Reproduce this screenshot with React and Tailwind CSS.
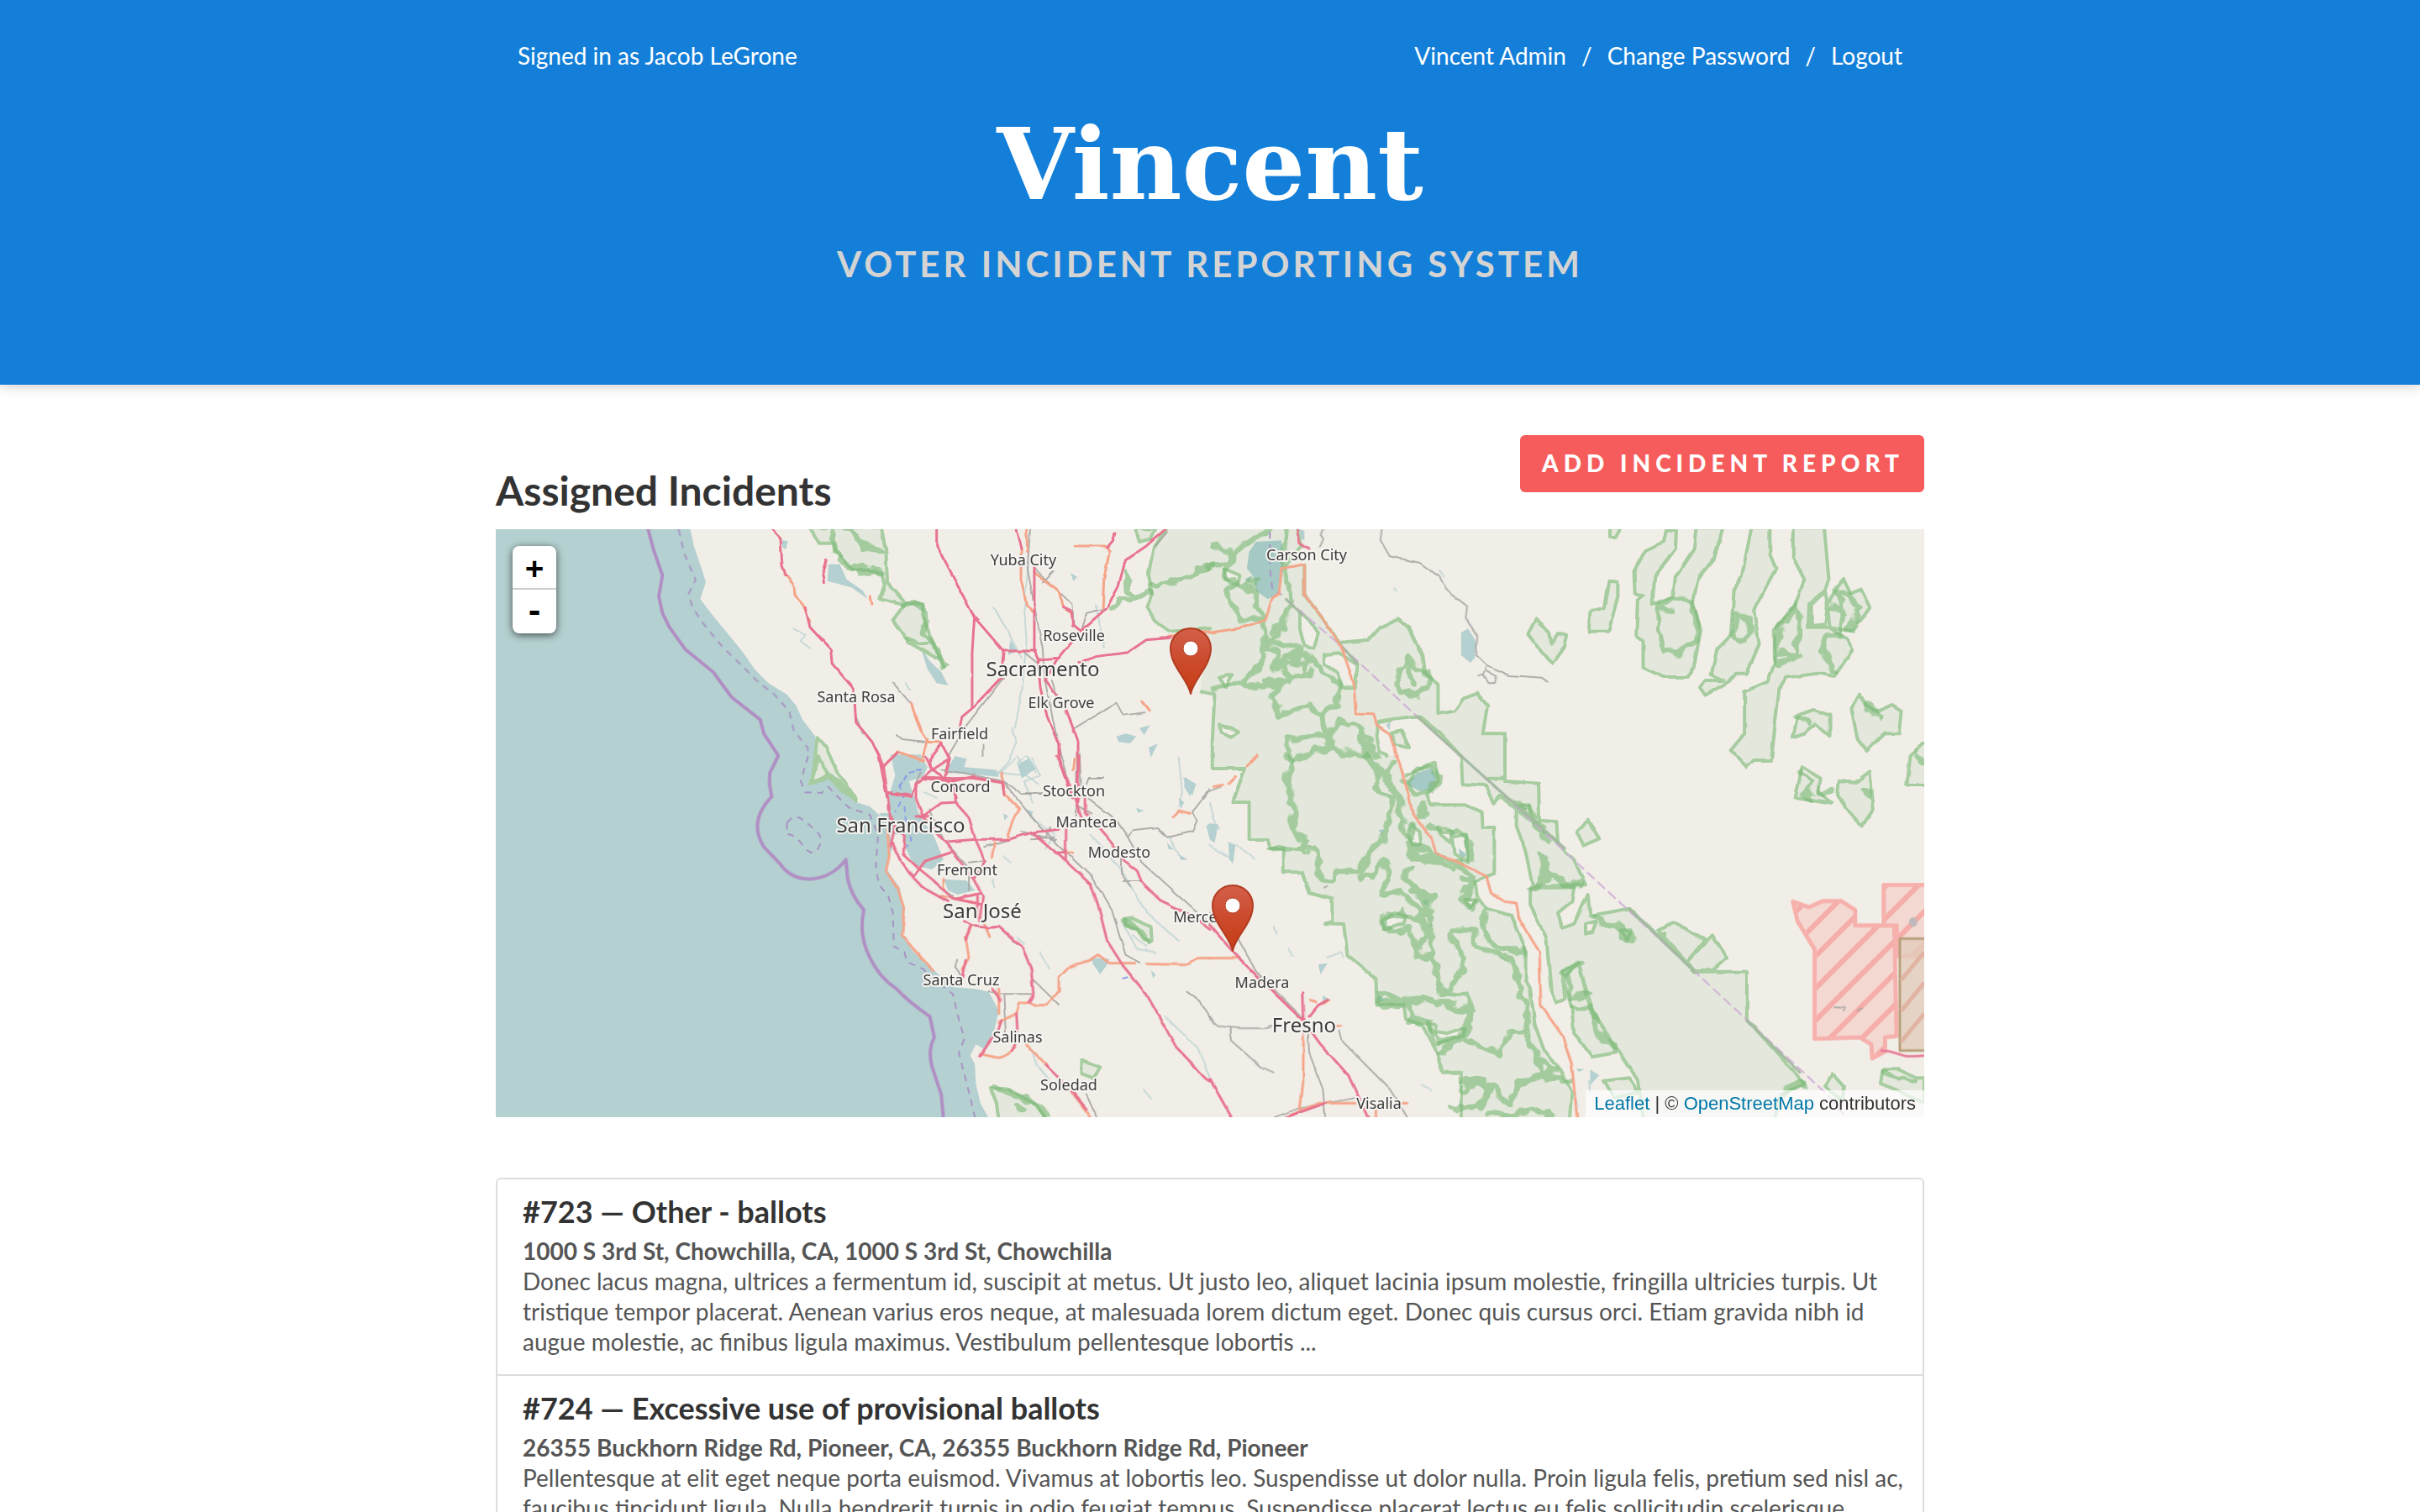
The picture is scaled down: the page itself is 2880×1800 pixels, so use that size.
const cities = [
  { name: 'Yuba City', x: 628, y: 43 },
  { name: 'Roseville', x: 688, y: 133 },
  { name: 'Sacramento', x: 651, y: 175, major: true },
  { name: 'Elk Grove', x: 673, y: 213 },
  { name: 'Santa Rosa', x: 429, y: 206 },
  { name: 'Fairfield', x: 552, y: 250 },
  { name: 'Concord', x: 553, y: 313 },
  { name: 'Stockton', x: 688, y: 318 },
  { name: 'San Francisco', x: 482, y: 361, major: true },
  { name: 'Manteca', x: 703, y: 355 },
  { name: 'Modesto', x: 742, y: 391 },
  { name: 'Fremont', x: 561, y: 412 },
  { name: 'San José', x: 579, y: 463, major: true },
  { name: 'Merced', x: 838, y: 468 },
  { name: 'Santa Cruz', x: 554, y: 543 },
  { name: 'Salinas', x: 621, y: 611 },
  { name: 'Soledad', x: 682, y: 668 },
  { name: 'Madera', x: 912, y: 546 },
  { name: 'Fresno', x: 962, y: 599, major: true },
  { name: 'Visalia', x: 1051, y: 690 },
  { name: 'Carson City', x: 965, y: 37 },
];

/* The map is drawn as four sheets that share one scale; each sheet has its own origin.
   `forest` areas are filled and outlined, `woods` only filled, `edge` only outlined. */
const sheets = [
  {
    id: 'nw',
    transform: 'translate(-10 -140) scale(0.5484 0.3333)',
    water: [
      'M0 400H438L448 480L465 560L474 610L462 670L490 730L520 790L555 860L580 920L610 970L650 1010L670 1050L684 1100L712 1160L716 1232H0Z',
      'M740 545L765 545L780 600L815 640L825 668L790 628L738 605Z',
      'M940 840L960 890L985 930L1000 978L975 970L955 920Z',
      'M875 1240L925 1225L955 1270L945 1300L940 1236L875 1236Z',
      'M1000 1270L1015 1230L1040 1240L1035 1270L1105 1280L1110 1305L1050 1295L1000 1290Z',
      'M640 460L652 462L648 492L640 485Z',
      'M1135 815L1150 855L1130 870Z',
      'M1365 1160L1385 1150L1408 1160L1395 1185L1370 1180ZM1415 1130L1438 1120L1425 1155ZM1435 1200L1455 1185L1440 1235Z',
      'M1265 575L1280 590L1272 605ZM1515 1305L1535 1330L1525 1375L1512 1340Z',
      'M1150 1260L1175 1240L1190 1275L1160 1310Z',
    ],
    streams: [
      'M665 775L690 795L680 820L700 845M908 965L918 990M1140 1130L1148 1180L1130 1250L1110 1290L1170 1300L1195 1330M1150 1255L1170 1230L1190 1290',
      'M1175 530L1165 700L1170 820L1160 1000L1145 1130M1100 700L1130 790L1160 880M1320 690L1340 840',
    ],
    forest: [
      'M700 415L855 415L865 500L868 610L905 680L945 685L945 730L965 820L992 912L985 890L915 825L880 745L905 690L850 670L862 620L855 575L790 560L755 500L750 470L720 470Z',
      'M716 1165L735 1200L760 1290L775 1320L800 1385L740 1300L705 1325Z',
      'M1405 415L1450 420L1440 455L1415 465Z',
    ],
    woods: ['M1475 415L1445 490L1435 580L1442 650L1432 700L1450 750L1480 785L1569 775V415Z'],
    edge: ['M1475 415L1445 490L1435 580L1442 650L1432 700L1450 750L1480 785L1569 775'],
    ridge: [
      'M750 420L755 500L790 560L855 575M780 420L820 480L860 490M905 690L945 685L950 780L990 910M915 820L950 830',
      'M1350 705L1375 670L1440 650M1385 570L1390 640L1420 660M1440 620L1500 600L1568 555',
    ],
    clearing: [],
    lake: [],
    trunk: [
      'M645 580L665 620L668 660L685 690L700 750M1158 490L1158 600L1170 690L1187 720M1187 575L1240 640L1250 700L1268 720',
      'M1275 480L1340 480L1350 500L1338 600L1335 700M920 1045L940 1140L955 1180L985 1182M945 1230L955 1170M1170 420L1172 500M830 660L833 688',
      'M1480 805L1568 785M1420 1035L1436 1068M858 1270L890 1215L945 1245M1275 1240L1272 1280M1118 1290V1320',
    ],
    rail: [
      'M1178 420L1172 560L1205 850L1210 960M1120 950L1040 1120L1000 1230M1165 860L1195 900M1275 1130L1365 1040L1380 1085L1425 1075M880 968L920 1045M890 1155L900 1170L955 1180M1187 560L1270 690L1272 770',
      'M1290 780L1300 720L1345 700M1225 960L1240 1030M1285 1220L1290 1380M1305 1308H1335M985 1280L1030 1290L1120 1320L1160 1365L1205 1365M1210 960L1240 1200L1270 1380M1075 1190V1230M1228 570L1205 610',
      'M1450 480L1475 430M1568 1345L1550 1380M800 1090L815 1150',
    ],
    motorway: [
      'M618 420L636 450L640 550L648 585M690 700L700 770L745 850L748 900L795 990L800 1110L835 1180L850 1230L858 1300L868 1380',
      'M975 415V480L1057 735L1120 855H1190M1057 735L1052 860V1060M1120 855L1115 950L1052 1060L1030 1090L1022 1150',
      'M1147 420L1158 490M1187 555V855L1195 885L1240 880L1290 780L1345 700L1370 620L1385 530L1430 480L1475 415M1250 700L1268 715L1270 765L1285 785',
      'M1195 885L1200 990L1215 1090L1240 1190V1240L1268 1380M1212 960L1255 1060L1282 1180V1380M1240 880L1210 960',
      'M1285 895L1320 875L1390 860L1430 815L1485 808M985 1185L960 1240L962 1270L1010 1340L1018 1380M985 1185L1003 1240L995 1290M945 1310L1010 1320L1050 1305L1118 1325L1122 1370M858 1270L890 1218',
      'M735 530L728 570L732 608M1362 435L1358 460L1345 485M868 1360L920 1372L930 1330',
    ],
    boundary: [
      'M348 415L360 490L380 585L372 660L380 720L395 770L430 850L490 930L530 1020L592 1100L600 1150L630 1225L630 1234',
    ],
    boundaryDashed: [
      'M415 420L428 510L452 600L437 650L445 700L470 760L510 840L560 920L590 970L620 1005L655 1070L665 1140L695 1200L696 1230',
    ],
    ferry: ['M915 1290L940 1280M893 1340L910 1300M866 1365L885 1360'],
    state: [],
    stateSolid: [],
  },
  {
    id: 'sw',
    transform: 'translate(-10 270) scale(0.5484 0.3333)',
    water: [
      'M0 0H716L697 100L740 75L775 110L800 165L830 180L850 210L870 262L880 320L865 400L895 470L905 560L900 640L925 700L960 750L985 790L1010 825L1060 832L1088 842L1110 910L1100 980L1082 1050L1060 1030L1048 1070L1058 1100L1060 1170L1070 1240L1090 1300H0Z',
      'M875 -5L940 -5L955 40L945 75L915 90L925 140L935 200L970 290L990 370L965 405L925 390L905 320L905 262L872 220V140L885 70Z',
      'M850 205L905 200L905 280H875Z',
      'M990 440L1040 445L1058 480L1020 495L1000 480Z',
      'M1310 720L1350 725L1345 745L1330 780L1315 745Z',
      'M1120 205L1130 215L1122 230ZM1170 190L1185 200L1178 220ZM1500 150L1512 165L1505 190ZM1475 310L1490 335L1478 332ZM1500 350L1520 370L1505 372ZM1408 185L1425 195L1412 203ZM1440 765L1450 780L1445 795Z',
      'M1510 75L1538 100L1530 140L1515 110ZM1560 250L1568 240V300Z',
    ],
    streams: [
      'M1110 65L1145 10M1180 10L1200 70L1165 90L1185 170M1150 0L1170 60M1180 1050L1190 1100L1220 1160M1500 5L1508 130L1500 180M1120 360L1135 380M1095 440L1100 470M1150 650L1165 670M1200 700L1220 760',
      'M1380 600L1410 690L1450 700M1400 640L1430 680M1480 290L1500 350M1425 1190L1440 1220M950 130L975 150M1180 220L1230 280L1210 330',
      'M1310 280L1380 420L1430 560L1500 660M1470 930L1540 1040L1568 1150',
    ],
    forest: [
      'M718 0L740 65L765 90L800 165L770 120L740 75L700 102L712 50Z',
      'M1383 585L1400 580L1440 610L1442 660L1425 655L1410 620L1385 602Z',
      'M1290 1085L1310 1100L1330 1115L1315 1150L1290 1135Z',
      'M1092 1185L1130 1190L1190 1245L1215 1300L1110 1300L1105 1240Z',
    ],
    woods: [],
    edge: [],
    ridge: ['M1383 590L1415 620L1440 655M1092 1185L1130 1195L1190 1245L1215 1290M1150 1250L1165 1262'],
    clearing: [],
    lake: [],
    trunk: [
      'M868 260L872 360L865 410L892 480L905 550L900 640L925 690L970 770M1120 100L1125 140L1155 190L1140 230L1128 290M1100 310L1095 360',
      'M1050 610L1038 650L1045 720L1030 765M1175 880L1190 890H1215L1240 840V790L1260 755L1305 730L1325 710L1350 740H1405M1432 743L1515 746L1540 722H1568',
      'M1110 830L1110 920M1175 880L1155 885L1148 920L1110 950M1070 1065L1110 1078L1130 1068L1145 1040M1170 1032L1190 1065L1215 1105M1268 1200L1310 1290M1490 215L1500 195L1525 205M1078 600L1090 645M990 440V480M985 500L1060 525',
      'M1245 345H1270M915 0L945 12',
    ],
    rail: [
      'M960 190L990 300L1045 400V480M1120 90L1150 155L1200 255L1310 430L1355 550L1385 710L1415 738M1305 155L1365 230L1390 290L1420 380L1500 500L1568 600M1390 290L1400 265L1455 255L1475 290L1530 270L1540 230L1530 200L1568 120',
      'M1280 0L1278 210M1300 100L1305 80H1335M1375 370V420L1395 465M1380 447H1420M1110 610L1150 670M1185 800L1240 888M1088 840L1110 850L1180 850M1020 725L1015 755L1030 790M1120 850L1125 990M1300 1210L1322 1290',
      'M1518 842L1545 875L1568 935M970 450L1010 500M1160 270L1235 300M1180 295L1230 290M1220 255L1210 290L1235 300M1078 325L1150 290M1045 380L1080 372M940 60L930 95M1160 133H1205M1283 180L1310 205',
    ],
    motorway: [
      'M850 0L860 40L868 130L920 145M868 130L870 190L885 250L875 320M868 130L875 230L905 285L903 350L935 400L965 440L1010 508L1070 530M880 310L900 380L925 435L945 470L1000 520',
      'M950 0L965 50L948 75L930 100V150L945 215L1000 320L1055 440L1075 500L1068 590M945 215L985 168L1015 165L1045 220L1060 300L1080 375L1055 440M1010 85L1015 165M950 75L1010 80L1050 78L1118 95L1122 135',
      'M925 430L950 375L1005 345M1000 305L1060 298H1130L1185 272L1240 262M1185 275L1255 375L1310 460L1325 530L1345 660L1380 750L1430 850L1495 1040L1568 1165M1256 255L1255 375M1232 345H1255',
      'M1018 510L1070 490M1035 590Q1060 620 1110 610L1160 680L1180 760L1185 850L1175 880M1048 610L1038 655M1038 730L1030 790M1098 830L1112 875M1235 0L1260 90L1290 220M1284 0L1280 180M1297 150V200L1345 290L1380 370L1410 410L1420 450L1460 515L1530 570L1568 620',
      'M1115 945L1108 980L1068 1072M1148 920L1150 970L1145 1000M1145 1030L1138 1055M1212 1105L1240 1150L1270 1200L1300 1260M1000 -4L1003 10L965 50M1000 30L990 75M930 215H960M1062 500V580',
    ],
    boundary: [
      'M631 0L613 60L612 100L617 145C585 200 575 260 600 325L635 385C665 460 735 460 778 370L782 440Q790 500 817 550Q805 640 830 720Q850 790 888 832Q915 880 960 930L970 1005Q955 1050 965 1110L985 1210L990 1300',
    ],
    boundaryDashed: [
      'M696 0L680 90L690 130L725 132L740 110L760 145L785 185L830 210L848 280L843 400L850 460L870 500L880 560L882 680L905 700L910 735L945 760L970 800L1010 850L1020 920L1035 1010L1023 1060L1045 1200L1058 1290',
      'M650 240Q665 205 682 225T715 270T718 330T685 320T650 280Z',
    ],
    ferry: ['M910 70L895 110L905 140L885 200M905 180L908 230L920 300L910 325M930 50L942 48M1378 795L1390 790'],
    state: [],
    stateSolid: [],
  },
  {
    id: 'ne',
    transform: 'translate(850 -140) scale(0.5484 0.3333)',
    water: ['M545 790L560 775L577 820L575 880L565 897L545 870Z', 'M192 420L205 425L205 460L197 455Z', 'M382 1120L392 1105L390 1138Z'],
    streams: ['M498 570L508 590M90 860L95 880M108 1180L115 1165M0 700L10 715M398 630L402 640'],
    woods: [
      'M-1 415H190L200 480L165 545L205 545V655L245 740L280 825L345 815L370 770L410 742L430 770L460 870L465 930L495 975V1080L530 1070L550 1025L580 1007L602 1050L592 1150H640V1234H545L500 1150L455 1090L400 1100L365 1110L362 1160L370 1200L380 1234H5V1180L10 1010L-20 1000Z',
    ],
    edge: [
      'M190 415L200 480L165 545M205 545V655L245 740L280 825L345 815L370 770L410 742L430 770L460 870L465 930L495 975V1080L530 1070L550 1025L580 1007L602 1050L592 1150H640V1231',
      'M545 1231L500 1150L455 1090L400 1100L365 1110L362 1160L368 1215L385 1225V1231M5 1231V1180L10 1010L-20 1000',
    ],
    forest: [
      'M990 425H1012L1010 490L965 590L960 690L1005 660L1010 590L1050 490L1055 415H1113L1095 520L1060 590L1048 680L1065 780L1050 915L1035 948H985L940 915V820L925 800L928 670L940 655L922 650L920 570L945 495L985 465Z',
      'M1175 415H1215V510L1228 560L1180 710L1192 830L1165 935H1140L1125 965L1075 1013L1063 985L1075 960H1115L1088 940L1100 850L1130 800L1137 640L1155 580Z',
      'M1265 415H1333L1343 600L1335 635L1300 690L1298 770H1345L1380 810L1395 850L1355 945L1320 935L1250 950L1235 990L1218 1245H1180L1165 1270L1130 1210L1160 1150V1000L1210 965L1225 900V780L1270 690L1290 600L1265 520Z',
      'M1375 600L1390 650L1413 635L1432 700L1395 785L1345 772L1340 690L1355 640Z',
      'M865 605L885 608V660L865 785H822L825 715L855 700Z',
      'M707 740L735 790L740 830L755 792L775 800L770 840L745 897L720 860L690 795Z',
      'M868 415H892L880 450H868Z',
      'M1265 1165L1275 1085L1310 1065L1345 1085V1160L1315 1115L1290 1150Z',
      'M1410 1010L1425 1050L1450 1070L1480 1050L1500 1070L1495 1150H1465L1425 1212L1405 1170L1392 1060Z',
      'M395 1145L415 1138L432 1200L400 1190Z',
    ],
    ridge: [
      'M10 480L50 510L30 580L70 620L100 600M0 560L40 540L45 490M40 640L55 620L95 630L105 700L115 740L75 745L45 690ZM165 420L160 545L170 620L175 700L140 800L120 830L115 740M130 420L80 470L50 510',
      'M120 830L110 900L70 970L0 990M130 820L200 850L180 900L230 900L250 940L280 970L275 1040L240 1090L210 1040L150 1090L130 1010L170 960L120 960M190 860L150 900L180 950L220 930M60 970L100 980L150 970M120 830L150 860L140 920L170 900M200 850L215 890L200 920',
      'M245 1090L255 1150L165 1170L170 1225M240 1090L260 1200L300 1220L340 1232M260 1200L220 1225L180 1240M285 1105L325 1130L330 1200L360 1225M290 1105L265 1140L262 1190M325 1150L345 1180L335 1210',
      'M430 875L440 920L470 930L475 980L450 1010L410 1000L405 940ZM430 900L440 970',
      'M975 700L1005 665L1045 680L1058 760L1055 820L1010 855L985 850L970 740ZM975 700L1005 715',
      'M1140 730L1165 735L1180 790L1160 820L1135 800ZM1270 685L1280 760L1270 880L1235 900L1230 780L1270 700M1240 860L1280 880M1365 640L1375 720L1365 800L1330 800L1340 880L1355 940M1350 690L1380 720M1375 640L1410 700L1390 780',
      'M1275 1085L1300 1110M1420 1050L1450 1090',
    ],
    clearing: [
      'M195 715L215 745L235 790L225 845L205 835L195 780Z',
      'M248 868L280 862L320 905L315 985H288L275 930L248 900Z',
      'M30 560L65 585L60 620L35 600ZM20 1120L45 1130L62 1145L45 1160L25 1145Z',
      'M1305 690L1335 640L1340 690L1335 760L1305 765ZM20 950L48 940L35 985Z',
    ],
    lake: ['M100 465L155 460L160 560L150 650L125 670L100 640L95 590L80 560L85 500Z', 'M75 600L92 585L85 610Z'],
    trunk: ['M0 790L60 775L120 745L135 670L150 650L155 560L205 545V655L245 740L285 840L312 970L316 1080L355 1082L362 1120L390 1150L404 1232M80 1265L100 1230'],
    rail: ['M373 415L370 460L390 517L455 540L498 590L515 640L558 695L555 740L580 800L578 870L600 905L650 942L720 950L732 965M600 905L592 940L605 970H618L622 945L600 925M582 940H592M245 420L240 440L246 455L238 485'],
    motorway: ['M190 415L195 470L215 492'],
    boundary: [],
    boundaryDashed: ['M130 430V560L135 630L155 655'],
    ferry: [],
    state: ['M165 670L280 830L450 1090L545 1232'],
    stateSolid: ['M165 670L200 725M278 825L320 900M450 1090L545 1232'],
  },
  {
    id: 'se',
    transform: 'translate(850 270) scale(0.5484 0.3333)',
    water: [
      'M365 680L378 690L370 705ZM0 240L18 245L10 310L0 300ZM40 310L55 320L50 385L42 370ZM235 745L255 740L240 780ZM245 855L260 870L245 885ZM825 1120L845 1140L825 1175ZM795 1115L812 1120L800 1128Z',
    ],
    streams: ['M0 170L10 230L20 260M40 310L60 320L95 365M0 320L50 370M140 610L145 635M170 690L178 710M200 120L240 150M540 330L555 375M460 1175L480 1195M820 1160L825 1200M255 720L285 700L290 720M795 1230L800 1250'],
    woods: [
      'M5 -2H404L425 70L490 20L495 90L470 140L480 175H555L590 200L592 258H617V420L600 430L575 450L580 500L600 545L655 570L685 690V800L695 830L705 960L725 1050L760 1120L785 1200L780 1300H545V1130H505L490 1050L460 960L425 940L420 885L362 890L360 795L298 710L290 600L250 598L265 590V510L215 490L200 415H160V330H130L125 300H85V165H50L75 45H5Z',
      'M545 -2H640V90L713 98L715 230L752 235L755 310L630 140L615 170L598 105L548 100Z',
    ],
    edge: [
      'M780 1300L785 1200L760 1120L725 1050L705 960L695 830L685 800V690L655 570L600 545L580 500L575 450L600 430L617 420V258H592L590 200L555 175H480L470 140L495 90L490 20L425 70M545 1300V1130H505L490 1050L460 960L425 940L420 885L362 890L360 795L298 710L290 600L250 598L265 590V510L215 490L200 415H160V330H130L125 300H85V165H50L75 45H5V0',
      'M640 0V90L713 98L715 230L752 235L755 310L630 140L615 170L598 105L548 100L545 0M605 80H640',
    ],
    forest: [
      'M665 180L715 250L790 370L815 460L700 465L685 340L665 250Z',
      'M695 470H790L785 520L755 560L765 615L790 600L820 495L825 570L910 545L1052 770H1165V940L1290 1170L1240 1210L1225 1300H940L930 1160L880 1040L830 910L800 740L765 770L770 870L750 880L740 840L730 650L695 530Z',
      'M765 800L800 740L825 900L870 1010L880 1060L830 1075L790 990L785 900Z',
      'M970 620L1005 595L1075 655L1035 735Z',
      'M1090 640L1120 720L1090 765H1052L1035 735Z',
      'M820 230L845 295L810 320L795 270Z',
      'M1285 40L1325 80L1320 130L1350 170L1270 150L1280 80Z',
      'M1365 90L1400 95L1432 55L1440 190L1415 250L1390 210L1362 140Z',
      'M1550 -45L1520 0L1512 105H1560V-45Z',
      'M1350 1135L1375 1180L1370 1230L1335 1180Z',
      'M1460 1120H1495L1530 1150H1550V1240L1500 1200L1455 1170Z',
      'M855 1160L910 1150L930 1200L880 1220Z',
    ],
    ridge: [
      'M180 20L165 90L185 180L180 270L210 300L205 325L130 330M180 20L160 -10M340 2L360 60L365 120L395 150L390 230L370 300L340 350L330 410L275 410L265 445L240 440L230 340L205 325M350 10L380 80L405 130L412 200',
      'M400 20L380 50L390 100L410 150L420 230L415 270L440 300L435 360L480 380L510 360L550 400L570 430L560 480M330 430L350 430L370 380L390 400L375 500L405 480L430 510L460 550M435 400L420 440L450 480L485 500L470 560L480 600M430 320L470 340L500 380L520 395M440 330L455 370L495 350L540 385',
      'M370 620L375 570L420 555L455 590L470 650L450 680L430 620ZM440 640L455 720L480 700L480 620L455 590M480 700L500 820L520 850L550 750L540 690L520 650L525 620L570 620L580 680L650 720L670 800L690 930L680 980L650 990L620 1060L570 1020L540 1010L505 1050M455 500L475 540L455 580L478 640M440 480L470 510',
      'M500 820L500 850L560 860L565 910L500 880L470 875L370 890L365 850L420 880M430 890L440 940L480 950L490 1020L540 1010L560 970V900M600 560L590 620L620 680L680 700',
      'M685 980L710 1080L720 1140L670 1170L650 1250L610 1180L560 1170L550 1200M550 1160L600 1155L605 1210L580 1250L520 1255M715 1080L750 1120L720 1140L780 1160M600 1270L650 1290L700 1260L740 1290',
      'M700 470L740 420L715 340L725 420L810 460M705 250L735 300M800 740L770 780L780 860L820 850M790 900L830 900L850 1010L880 1040M665 170L690 175L705 230L720 250M840 580L900 620L915 650L895 640M745 430L765 460L800 455',
      'M1285 50L1310 90L1285 140L1310 150M1320 130L1355 130M1415 130L1435 135M1465 1130L1490 1160L1530 1170M1535 0L1550 20',
      'M450 195L460 185L468 200L458 208ZM475 250L560 280L565 380M440 240L445 300',
      'M1240 1210L1260 1180L1290 1170M548 440L570 450L560 500L550 480M550 510L565 545L580 510M425 95L450 50L482 38L494 85L480 128L450 132Z',
    ],
    clearing: [
      'M372 590L400 560L425 575L420 600L380 620Z',
      'M435 245L455 270L458 315L440 320L430 280ZM495 250L525 270L522 310L500 280ZM525 290L556 280L560 380L530 350Z',
      'M472 955L488 960L490 985L515 990L552 970L550 1000L505 1020L490 1030Z',
      'M815 600L838 590L830 630L815 635ZM890 620L915 625L905 655ZM825 890L838 930L832 935ZM670 180L690 175L700 220Z',
      'M553 510L565 540L578 512ZM970 640L985 630L985 655Z',
    ],
    lake: ['M425 100L450 60L480 45L492 80L480 120L455 125Z', 'M362 850L380 870L365 885ZM460 520L475 510L470 535ZM620 710L645 730L635 725Z', 'M540 330L555 350L550 378L543 370ZM365 265L378 262L374 280ZM480 600L486 605L476 612Z'],
    trunk: [
      'M404 0L430 130L440 210L480 290L490 345L545 385L600 430L610 490L640 520L665 525L670 580L715 700L718 890L765 1000L785 1100L797 1300',
      'M40 98L56 72M10 110L28 104M80 35L100 0M0 722H60M203 1000L202 1170L195 1270M218 872L230 878M245 885L258 872M270 962H284M235 1240H320M415 1240H428M360 1260V1290M165 1290L235 1240',
    ],
    rail: [
      'M60 650L100 770L210 950M0 940L20 965L60 972H120L135 962M45 972V1015L110 1110L138 1130M280 980L285 1015L390 1190L428 1290M213 990L215 1060L245 1190L250 1290M140 1290L190 1260L320 1220M0 125L25 110M0 560L10 590M0 930L10 955',
      'M248 470L254 465M1355 897L1380 900L1375 912M1405 910L1415 898',
    ],
    motorway: ['M0 605L50 700L110 800L205 950L240 1030L300 1140L345 1300M202 845L205 990M215 930L235 890L255 872M0 1155L50 1300M165 1290L250 1240'],
    boundary: [],
    boundaryDashed: [],
    ferry: [],
    state: ['M545 0L1052 770L1340 1210L1380 1290'],
    stateSolid: ['M545 0L640 140L770 330M910 545L1052 770M1165 945L1280 1130'],
  },
];

function Lines({ paths, color, width, dash, opacity }) {
  return (
    <g fill="none" stroke={color} strokeWidth={width} strokeDasharray={dash} opacity={opacity} strokeLinejoin="round" strokeLinecap={dash ? 'butt' : 'round'}>
      {paths.map((d) => (
        <path key={d} d={d} vectorEffect="non-scaling-stroke" />
      ))}
    </g>
  );
}

function Areas({ paths, color }) {
  return (
    <g fill={color}>
      {paths.map((d) => (
        <path key={d} d={d} />
      ))}
    </g>
  );
}

function Layer({ filter, children }) {
  return (
    <g filter={filter}>
      {sheets.map((s) => (
        <g key={s.id} transform={s.transform}>
          {children(s)}
        </g>
      ))}
    </g>
  );
}

function Pin({ x, y }) {
  return (
    <g transform={`translate(${x} ${y})`}>
      <path
        d="M0 79C-3 62-24 46-24 25A24 24 0 0 1 24 25C24 46 3 62 0 79Z"
        fill="url(#pin)"
        stroke="#b23c22"
        strokeWidth="2"
        strokeLinejoin="round"
      />
      <circle cy="25" r="9" fill="#fff" stroke="#b8452c" strokeWidth="1" />
    </g>
  );
}

function MapDrawing() {
  return (
    <svg className="block h-full w-full" viewBox="0 0 1700 700" preserveAspectRatio="xMidYMid slice" role="img" aria-label="Map of assigned incidents">
      <defs>
        <linearGradient id="pin" x1="0" y1="0" x2="0" y2="1">
          <stop offset="0" stopColor="#d3604b" />
          <stop offset="0.5" stopColor="#cb4a2c" />
          <stop offset="1" stopColor="#c83c14" />
        </linearGradient>
        <pattern id="hatch" width="27" height="27" patternUnits="userSpaceOnUse" patternTransform="scale(1.8235 3) rotate(45)">
          <rect width="27" height="27" fill="#f4d8d2" />
          <rect width="6" height="27" fill="#f6aca8" />
        </pattern>
        <filter id="rough" x="0" y="0" width="1700" height="700" filterUnits="userSpaceOnUse">
          <feTurbulence type="fractalNoise" baseFrequency="0.06" numOctaves="2" seed="4" result="n" />
          <feDisplacementMap in="SourceGraphic" in2="n" scale="16" xChannelSelector="R" yChannelSelector="G" />
        </filter>
        <filter id="wavy" x="0" y="0" width="1700" height="700" filterUnits="userSpaceOnUse">
          <feTurbulence type="fractalNoise" baseFrequency="0.06" numOctaves="1" seed="9" result="n" />
          <feDisplacementMap in="SourceGraphic" in2="n" scale="4" xChannelSelector="R" yChannelSelector="G" />
        </filter>
      </defs>
      <rect width="1700" height="700" fill="#f1eee8" />
      <Layer>{(s) => <Areas paths={s.water} color="#b5d0d0" />}</Layer>
      <Layer filter="url(#wavy)">{(s) => <Lines paths={s.streams} color="#b5d0d0" width="2" opacity="0.7" />}</Layer>
      <Layer>{(s) => <Areas paths={[...s.woods, ...s.forest]} color="#e4e8dc" />}</Layer>
      <Layer>{(s) => <Areas paths={s.clearing} color="#f1eee8" />}</Layer>
      <Layer>{(s) => <Areas paths={s.lake} color="#a5c9c4" />}</Layer>
      <Layer filter="url(#wavy)">{(s) => <Lines paths={[...s.edge, ...s.forest, ...s.clearing]} color="#a6cca0" width="4" />}</Layer>
      <Layer filter="url(#rough)">{(s) => <Lines paths={s.ridge} color="#78b874" width="7" opacity="0.6" />}</Layer>
      <g transform="translate(850 270) scale(0.5484 0.3333)" strokeLinejoin="round">
        <path d="M1265 520L1300 540L1330 518H1370L1400 550V605H1485L1490 1000L1465 1005V1055L1437 1080L1435 1030L1410 1005L1312 1010V690L1275 590Z" fill="url(#hatch)" stroke="#f7b1ad" strokeWidth="5" vectorEffect="non-scaling-stroke" />
        <path d="M1462 460H1560V715H1492L1490 605H1462Z" fill="url(#hatch)" stroke="#f7b1ad" strokeWidth="5" vectorEffect="non-scaling-stroke" />
        <path d="M1497 652H1570V1052H1497Z" fill="#e2cdbb" fillOpacity="0.8" stroke="#b8a07c" strokeWidth="3" vectorEffect="non-scaling-stroke" />
        <path d="M1500 800L1550 700M1500 910L1550 810M1500 1020L1550 920" stroke="#e0b3a2" strokeWidth="5" vectorEffect="non-scaling-stroke" />
        <path d="M1455 1052L1475 1055L1510 1072H1530L1550 1070" fill="none" stroke="#e8809c" strokeWidth="3" vectorEffect="non-scaling-stroke" />
        <ellipse cx="1526" cy="593" rx="9" ry="17" fill="#c0b8ba" />
      </g>
      <Layer>{(s) => <Lines paths={s.state} color="#cfaed6" width="2" dash="12 5" />}</Layer>
      <Layer>{(s) => <Lines paths={s.stateSolid} color="#a3b99f" width="3" />}</Layer>
      <Layer>{(s) => <Lines paths={s.boundary} color="#b08fc4" width="4" />}</Layer>
      <Layer>{(s) => <Lines paths={s.boundaryDashed} color="#a795c4" width="2" dash="8 7" />}</Layer>
      <Layer>{(s) => <Lines paths={s.ferry} color="#8f9fe8" width="2" dash="7 5" />}</Layer>
      <Layer filter="url(#wavy)">{(s) => <Lines paths={s.rail} color="#a5a3a0" width="2" opacity="0.85" />}</Layer>
      <Layer filter="url(#wavy)">{(s) => <Lines paths={s.trunk} color="#f5a488" width="3" />}</Layer>
      <Layer filter="url(#wavy)">{(s) => <Lines paths={s.motorway} color="#e8738f" width="3" />}</Layer>
      <g textAnchor="middle" fill="#3c3c3c" stroke="#f6f4f0" strokeWidth="4" strokeLinejoin="round" paintOrder="stroke" fontFamily="'Noto Sans', sans-serif">
        {cities.map((c) => (
          <text key={c.name} x={c.x} y={c.y} fontSize={c.major ? 24 : 18}>
            {c.name}
          </text>
        ))}
      </g>
      <Pin x={827} y={117} />
      <Pin x={877} y={423} />
    </svg>
  );
}

const incidents = [
  {
    id: 723,
    title: 'Other - ballots',
    address: '1000 S 3rd St, Chowchilla, CA, 1000 S 3rd St, Chowchilla',
    text: 'Donec lacus magna, ultrices a fermentum id, suscipit at metus. Ut justo leo, aliquet lacinia ipsum molestie, fringilla ultricies turpis. Ut tristique tempor placerat. Aenean varius eros neque, at malesuada lorem dictum eget. Donec quis cursus orci. Etiam gravida nibh id augue molestie, ac finibus ligula maximus. Vestibulum pellentesque lobortis ...',
  },
  {
    id: 724,
    title: 'Excessive use of provisional ballots',
    address: '26355 Buckhorn Ridge Rd, Pioneer, CA, 26355 Buckhorn Ridge Rd, Pioneer',
    text: 'Pellentesque at elit eget neque porta euismod. Vivamus at lobortis leo. Suspendisse ut dolor nulla. Proin ligula felis, pretium sed nisl ac, faucibus tincidunt ligula. Nulla hendrerit turpis in odio feugiat tempus. Suspendisse placerat lectus eu felis sollicitudin scelerisque.',
  },
];

function Header() {
  return (
    <header className="bg-[#147fd9] pb-[118px] text-white shadow-[0_2px_14px_rgba(0,0,0,0.2)]">
      <div className="mx-auto max-w-[1700px] px-[26px] pt-12">
        <nav className="flex justify-between text-[28px] leading-9">
          <span>Signed in as Jacob LeGrone</span>
          <ul className="flex">
            <li><a href="#admin">Vincent Admin</a></li>
            <li className="before:px-[18px] before:content-['/']"><a href="#password">Change Password</a></li>
            <li className="before:px-[18px] before:content-['/']"><a href="#logout">Logout</a></li>
          </ul>
        </nav>
        <h1 className="mt-[42px] text-center font-['DejaVu_Serif',serif] text-[118px] leading-[140px] font-bold">Vincent</h1>
        <p className="mt-[22px] text-center text-[42px] leading-[52px] font-bold tracking-[4px] text-[#d4d4d4] uppercase">Voter Incident Reporting System</p>
      </div>
    </header>
  );
}

export default function App() {
  return (
    <div className="h-screen overflow-hidden bg-white font-['Lato',sans-serif] text-[#333]">
      <Header />
      <main className="mx-auto max-w-[1700px] pt-[60px]">
        <div className="flex items-start justify-between">
          <h2 className="mt-9 mb-4 text-[48px] leading-[60px] font-bold">Assigned Incidents</h2>
          <button type="button" className="h-[68px] rounded-md bg-[#f65c5c] pr-6 pb-[2px] pl-[26px] text-[28px] leading-9 font-black tracking-[6px] text-white uppercase">
            Add Incident Report
          </button>
        </div>
        <section className="relative h-[700px] overflow-hidden">
          <MapDrawing />
          <div className="absolute top-5 left-5 flex w-[52px] flex-col rounded-lg bg-white font-['DejaVu_Sans_Mono',monospace] text-[36px] font-bold text-black shadow-[0_2px_10px_rgba(0,0,0,0.65)]">
            <button type="button" aria-label="Zoom in" className="h-[52px] border-b-2 border-[#ccc] pt-1 leading-[46px]">+</button>
            <button type="button" aria-label="Zoom out" className="h-[52px] leading-[50px]">-</button>
          </div>
          <p className="absolute right-0 bottom-0 bg-white/70 px-[10px] font-['Liberation_Sans',sans-serif] text-[22px] leading-8">
            <a href="#leaflet" className="text-[#0078a8]">Leaflet</a> | © <a href="#osm" className="text-[#0078a8]">OpenStreetMap</a> contributors
          </p>
        </section>
        <ul className="mt-[72px] divide-y-2 divide-[#ddd] rounded-md border-2 border-[#ddd]">
          {incidents.map((i) => (
            <li key={i.id} className="pt-4 pr-3 pb-[21px] pl-[30px] text-[28px] leading-9 text-[#555]">
              <h3 className="mb-[7px] text-[36px] leading-[44px] font-bold text-[#333]">
                #{i.id} — {i.title}
              </h3>
              <p className="font-bold">{i.address}</p>
              <p>{i.text}</p>
            </li>
          ))}
        </ul>
      </main>
    </div>
  );
}
